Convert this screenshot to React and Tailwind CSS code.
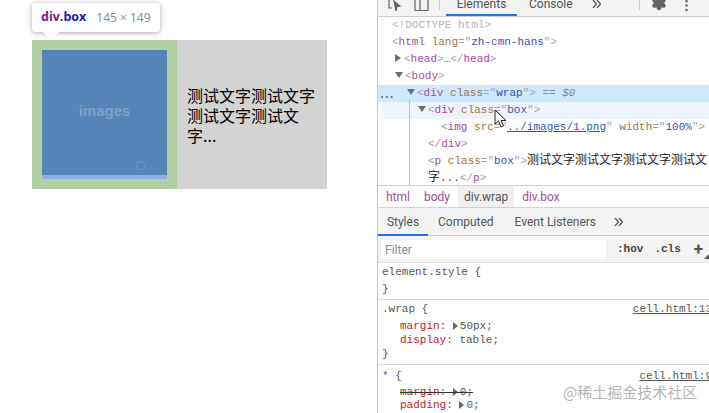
import { MoreVertical, Settings } from 'lucide-react';

const mono = 'font-["Liberation_Mono",monospace] text-[11px]';
const cjk = 'font-["Noto_Sans_CJK_SC",sans-serif]';
const tag = 'text-[#a54a9c]';
const attr = 'text-[#a8703c]';
const val = 'text-[#3c4fa8]';
const punct = 'text-[#a3a3a3]';

function Row({ indent = 0, className = '', children }) {
  return (
    <div className={`h-[17px] leading-[17px] whitespace-pre ${className}`} style={{ paddingLeft: indent }}>
      {children}
    </div>
  );
}

function Arrow({ down }) {
  return down ? (
    <span className="mr-[2px] inline-block h-0 w-0 border-x-[4px] border-t-[6px] border-x-transparent border-t-[#6e6e6e] align-[1px]" />
  ) : (
    <span className="mr-[3px] inline-block h-0 w-0 border-y-[4px] border-l-[6px] border-y-transparent border-l-[#6e6e6e] align-[0px]" />
  );
}

function SmallArrow() {
  return <span className="mr-[2px] inline-block h-0 w-0 border-y-[4px] border-l-[5px] border-y-transparent border-l-[#666] align-[-1px]" />;
}

function Chevrons({ className = '' }) {
  return (
    <svg className={className} width="9" height="8" viewBox="0 0 9 8" fill="none" stroke="#555" strokeWidth="1.3">
      <path d="M1 0l3.500 4L1 8M5 0l3.500 4L5 8" />
    </svg>
  );
}

function Tree() {
  return (
    <div className={`relative h-[168px] ${mono}`}>
      <Row indent={14} className="text-[#b5b5b5]">{'<!DOCTYPE html>'}</Row>
      <Row indent={14}>
        <span className={punct}>{'<'}</span><span className={tag}>html</span>{' '}<span className={attr}>lang</span><span className={punct}>{'="'}</span><span className={val}>zh-cmn-hans</span><span className={punct}>{'">'}</span>
      </Row>
      <Row indent={17}>
        <Arrow /><span className={punct}>{'<'}</span><span className={tag}>head</span><span className={punct}>{'>'}</span><span className="text-[#777]">…</span><span className={punct}>{'</'}</span><span className={tag}>head</span><span className={punct}>{'>'}</span>
      </Row>
      <Row indent={17}>
        <Arrow down /><span className={punct}>{'<'}</span><span className={tag}>body</span><span className={punct}>{'>'}</span>
      </Row>
      <Row indent={29} className="bg-[#cfe8fc]">
        <Arrow down /><span className={punct}>{'<'}</span><span className={tag}>div</span>{' '}<span className={attr}>class</span><span className={punct}>{'="'}</span><span className={val}>wrap</span><span className={punct}>{'">'}</span><span className="text-[#8a8a8a]">{' == '}</span><span className="text-[#8a8a8a] italic">$0</span>
      </Row>
      <Row indent={36} className="ml-[4px] bg-[#eef4fd]">
        <Arrow down /><span className={punct}>{'<'}</span><span className={tag}>div</span>{' '}<span className={attr}>class</span><span className={punct}>{'="'}</span><span className={val}>box</span><span className={punct}>{'">'}</span>
      </Row>
      <Row indent={63}>
        <span className={punct}>{'<'}</span><span className={tag}>img</span>{' '}<span className={attr}>src</span><span className={punct}>{'="'}</span><span className="text-[#2a5db0] underline">../images/1.png</span><span className={punct}>{'" '}</span><span className={attr}>width</span><span className={punct}>{'="'}</span><span className={val}>100%</span><span className={punct}>{'">'}</span>
      </Row>
      <Row indent={50}>
        <span className={punct}>{'</'}</span><span className={tag}>div</span><span className={punct}>{'>'}</span>
      </Row>
      <Row indent={50}>
        <span className={punct}>{'<'}</span><span className={tag}>p</span>{' '}<span className={attr}>class</span><span className={punct}>{'="'}</span><span className={val}>box</span><span className={punct}>{'">'}</span>
        <span className={`${cjk} text-[12px] leading-none text-[#222]`}>测试文字测试文字测试文字测试文</span>
      </Row>
      <Row indent={50}>
        <span className={`${cjk} text-[12px] leading-none text-[#222]`}>字</span><span className="text-[#444]">...</span><span className={punct}>{'</'}</span><span className={tag}>p</span><span className={punct}>{'>'}</span>
      </Row>
      <span className="absolute top-[83px] bottom-0 left-[31px] w-px bg-[#a9c8e4]" />
      <span className="absolute top-[72px] left-[2px] text-[7px] leading-[17px] tracking-[0.5px] text-[#666]">•••</span>
    </div>
  );
}

function Source({ children }) {
  return <span className="float-right mr-[-7px] text-[#555] underline">{children}</span>;
}

export default function App() {
  return (
    <div className='relative flex h-[413px] w-[709px] overflow-hidden bg-white font-["Roboto",sans-serif]'>
      <div className="relative w-[377px] shrink-0">
        <div className="mt-[40px] ml-[32px] flex h-[149px] w-[295px]">
          <div className="h-[149px] w-[145px] bg-[#b2cea4] p-[10px]">
            <div className="relative flex h-[129px] w-[125px] items-center justify-center border-b-[4px] border-[#8bb0de] bg-[#5584b8]">
              <span className='mb-[2px] font-["Liberation_Sans",sans-serif] text-[15px] font-bold text-[#7ea0c8]'>images</span>
              <svg className="absolute right-[8px] bottom-[3px]" width="24" height="12" viewBox="0 0 24 12" fill="none" stroke="#6f96c4" strokeWidth="1">
                <path d="M2 2h6l2 3v2l-3 3H2z" />
                <path d="M14 8h3M19 8h3" />
              </svg>
            </div>
          </div>
          <div className="flex h-[149px] w-[150px] items-center bg-[#d3d3d3] px-[10px]">
            <p className={`${cjk} text-[16px] leading-[20px] text-black`}>测试文字测试文字测试文字测试文字...</p>
          </div>
        </div>
        {/* element tooltip */}
        <div className='absolute top-[3px] left-[32px] flex h-[29px] w-[128px] items-center rounded-[3px] bg-white pl-[9px] font-["Open_Sans",sans-serif] text-[12.500px] shadow-[0_1px_5px_rgba(0,0,0,0.35)]'>
          <span className="font-bold text-[#881280]">div</span>
          <span className="font-bold text-[#1a1aa6]">.box</span>
          <span className="ml-[10px] text-[12px] text-[#888]">145 × 149</span>
        </div>
        <span className="absolute top-[32px] left-[43px] h-0 w-0 border-x-[8px] border-t-[8px] border-x-transparent border-t-white" />
      </div>

      <div className="relative flex min-w-0 flex-1 flex-col border-l border-[#c8c8c8] text-[12px] text-[#555]">
        {/* top toolbar, cut off by the crop */}
        <div className="flex h-[17px] shrink-0 items-start overflow-hidden border-b border-[#cdcdcd] bg-[#f3f3f3]">
          <svg className="ml-[10px]" width="14" height="11" viewBox="0 0 14 11" fill="none" stroke="#666" strokeWidth="1.2">
            <path d="M1 0v8h3" />
            <path d="M6 1l6 5-3 .5L8 11z" fill="#666" />
          </svg>
          <svg className="ml-[12px]" width="15" height="11" viewBox="0 0 15 11" fill="none" stroke="#666" strokeWidth="1.200">
            <path d="M1 0v10.500h13V0M6 0v10" />
          </svg>
          <span className="ml-[10px] h-[10px] w-px bg-[#ccc]" />
          <div className="relative ml-[6px] flex h-[16px] w-[71px] justify-center">
            <span className="mt-[-3px] leading-[14px]">Elements</span>
            <span className="absolute right-0 bottom-0 left-0 h-[2px] bg-[#1a73e8]" />
          </div>
          <span className="mt-[-3px] ml-[12px] leading-[14px]">Console</span>
          <Chevrons className="mt-[0px] ml-[19px]" />
          <span className="ml-[38px] h-[10px] w-px bg-[#ccc]" />
          <Settings className="mt-[-5px] ml-[11px] text-[#666]" size={16} fill="#666" />
          <MoreVertical className="mt-[-2px] ml-[12px] text-[#666]" size={15} />
        </div>

        <Tree />

        {/* breadcrumb */}
        <div className="flex h-[23px] shrink-0 items-stretch border-y border-[#d2d2d2] text-[#a54a9c]">
          <span className="flex items-center pr-[14px] pl-[8px]">html</span>
          <span className="flex items-center pr-[8px]">body</span>
          <span className="flex items-center bg-[#f0f0f0] px-[6px] text-[#555]">div.wrap</span>
          <span className="flex items-center pl-[8px]">div.box</span>
        </div>

        {/* styles tabs */}
        <div className="flex h-[28px] shrink-0 items-center border-b border-[#cdcdcd] bg-[#f3f3f3]">
          <div className="relative flex h-full w-[50px] items-center justify-center">
            Styles
            <span className="absolute right-0 bottom-[-1px] left-0 h-[2px] bg-[#1a73e8]" />
          </div>
          <span className="ml-[10px]">Computed</span>
          <span className="ml-[21px]">Event Listeners</span>
          <Chevrons className="ml-[18px]" />
        </div>

        {/* filter */}
        <div className="relative flex h-[27px] shrink-0 items-center border-b border-[#e0e0e0] bg-[#f3f3f3] pt-[1px] pl-[3px]">
          <div className="flex h-[19px] w-[225px] items-center bg-white pl-[4px] text-[#8a8a8a]">Filter</div>
          <span className={`ml-[11px] font-bold text-[#444] ${mono}`}>:hov</span>
          <span className={`ml-[11px] font-bold text-[#444] ${mono}`}>.cls</span>
          <span className="ml-[13px] text-[17px] leading-none font-bold text-[#555]">+</span>
          <span className="absolute right-0 bottom-[3px] h-0 w-0 border-b-[5px] border-l-[5px] border-b-[#555] border-l-transparent" />
        </div>

        {/* style rules */}
        <div className={`${mono} leading-[17px] text-[#555]`}>
          <div className="border-b border-[#d9d9d9] px-[4px] pt-[1px] pb-[1px]">
            <div>{'element.style {'}</div>
            <div>{'}'}</div>
          </div>
          <div className="border-b border-[#d9d9d9] px-[4px] pt-[1px] pb-[1px]">
            <Source>cell.html:13</Source>
            <div>{'.wrap {'}</div>
            <div className="mt-[1px] h-[14px] pl-[18px] leading-[14px] whitespace-pre">
              <span className="text-[#c0202a]">margin</span>{': '}<SmallArrow />50px;
            </div>
            <div className="h-[14px] pl-[18px] leading-[14px] whitespace-pre">
              <span className="text-[#c0202a]">display</span>: table;
            </div>
            <div className="mt-[-1px]">{'}'}</div>
          </div>
          <div className="px-[4px] pt-[3px]">
            <Source>cell.html:9</Source>
            <div>{'* {'}</div>
            <div className="h-[14px] pl-[18px] leading-[14px] whitespace-pre">
              <span className="relative inline-block">
                <span className="text-[#c0202a]">margin</span>{': '}<SmallArrow />0;
                <span className="absolute top-[7px] right-0 left-0 h-px bg-[#333]" />
              </span>
            </div>
            <div className="mt-[-1px] h-[14px] pl-[18px] leading-[14px] whitespace-pre">
              <span className="text-[#c0202a]">padding</span>{': '}<SmallArrow />0;
            </div>
          </div>
        </div>

        {/* watermark */}
        <span className={`absolute top-[384px] left-[185px] ${cjk} text-[15px] leading-none whitespace-nowrap text-[#b5b5b5]`}>@稀土掘金技术社区</span>
      </div>

      {/* mouse pointer */}
      <svg className="absolute top-[109px] left-[494px]" width="14" height="20" viewBox="0 0 14 20">
        <path d="M1 1v14l3.500-3 2.500 6 2.500-1-2.500-5.500h5z" fill="#fff" stroke="#222" strokeWidth="1" />
      </svg>
    </div>
  );
}
